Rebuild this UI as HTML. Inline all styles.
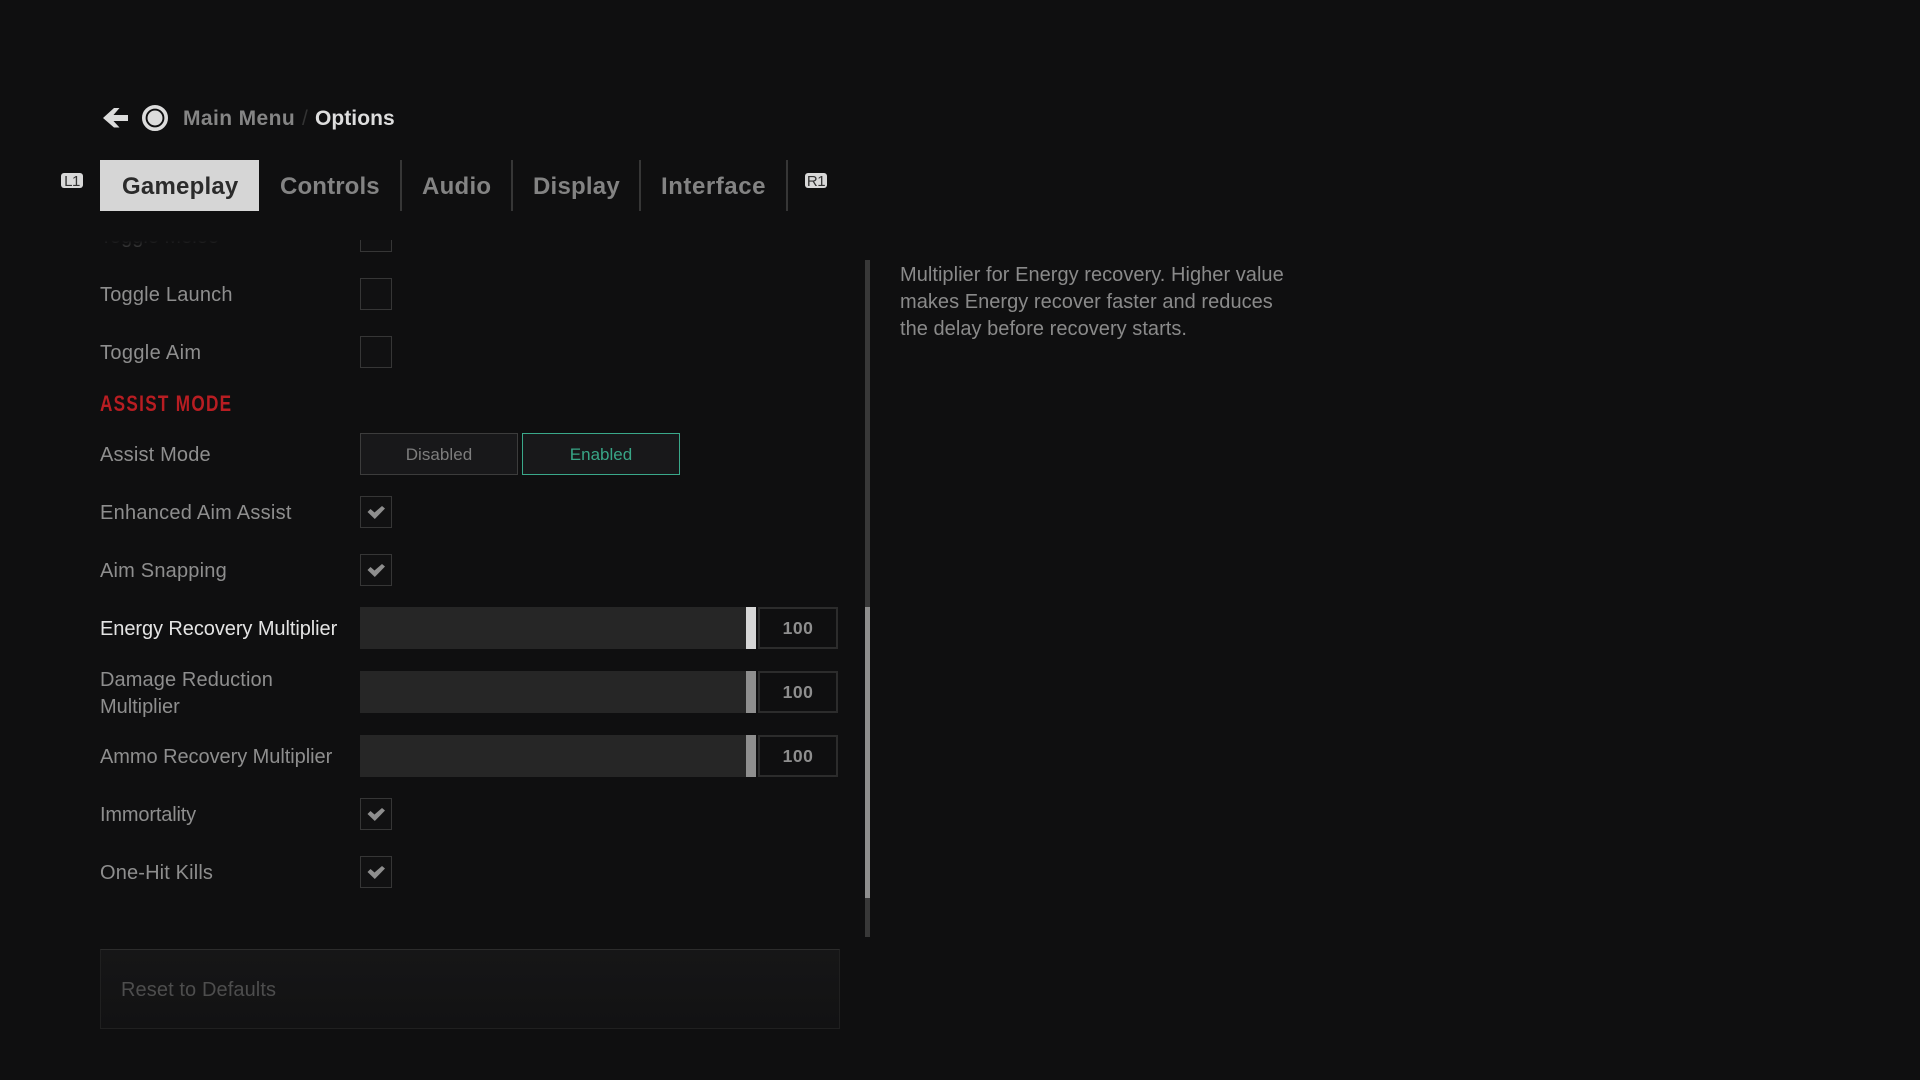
<!DOCTYPE html>
<html><head><meta charset="utf-8"><title>Options</title>
<style>
html,body{margin:0;padding:0;width:1920px;height:1080px;overflow:hidden;background:#0f0f10;}
body{position:relative;font-family:"Liberation Sans",Arial,sans-serif;color:#8e8e8e;}
.a{position:absolute;white-space:nowrap;}
.lab{position:absolute;left:100px;font-size:20px;line-height:27px;white-space:nowrap;color:#8e8e8e;}
.cb{position:absolute;left:360px;width:30px;height:30px;border:1px solid #363636;background:#111112;}
.cb svg{position:absolute;left:-1px;top:-1px;}
.tab{position:absolute;top:170.500px;font-size:24px;line-height:32px;font-weight:bold;color:#838383;white-space:nowrap;}
.div{position:absolute;top:160px;width:2px;height:51px;background:#363636;}
.track{position:absolute;left:360px;width:386px;height:42px;background:#262626;}
.h{position:absolute;left:746px;width:10px;height:42px;background:#8e8e8e;}
.val{position:absolute;left:758px;border:2px solid #2c2c2c;width:76px;height:38px;line-height:39px;text-align:center;font-size:17.500px;letter-spacing:.5px;font-weight:bold;color:#8e8e8e;background:#0f0f10;}
.badge{position:absolute;width:22px;height:15px;background:#d8d8d8;border-radius:3px;color:#333;font-size:15px;letter-spacing:-.5px;line-height:17px;text-align:center;}
</style></head><body>

<svg class="a" style="left:100px;top:104px" width="72" height="28" viewBox="100 104 72 28">
<path d="M103 118 L114 108 L119.500 108 L113.500 115 L128 115 L128 121 L113.500 121 L119.500 127.500 L114 127.500Z" fill="#dcdcdc"/>
<circle cx="155" cy="118" r="11.200" fill="none" stroke="#dcdcdc" stroke-width="3.600"/>
<circle cx="155" cy="118" r="7.500" fill="#dcdcdc"/>
</svg>
<div class="a" style="left:183px;top:106px;font-size:21px;line-height:26px;font-weight:bold;color:#858585;letter-spacing:.4px;">Main Menu</div>
<div class="a" style="left:302px;top:106px;font-size:21px;line-height:26px;color:#333;">/</div>
<div class="a" style="left:315px;top:106px;font-size:21px;line-height:26px;font-weight:bold;color:#dedede;letter-spacing:.05px;">Options</div>

<div class="badge" style="left:61px;top:173px;">L1</div>
<div class="a" style="left:100px;top:160px;width:159px;height:51px;background:#d6d6d6;"></div>
<div class="tab" style="left:122px;color:#2b2b2b;letter-spacing:.22px;">Gameplay</div>
<div class="tab" style="left:280px;letter-spacing:.14px;">Controls</div>
<div class="div" style="left:400px;"></div>
<div class="tab" style="left:422px;letter-spacing:.27px;">Audio</div>
<div class="div" style="left:511px;"></div>
<div class="tab" style="left:533px;letter-spacing:.22px;">Display</div>
<div class="div" style="left:639px;"></div>
<div class="tab" style="left:661px;letter-spacing:.55px;">Interface</div>
<div class="div" style="left:786px;"></div>
<div class="badge" style="left:805px;top:173px;">R1</div>

<div class="a" style="left:0;top:240px;width:860px;height:12px;overflow:hidden;">
  <div class="lab" style="top:-16px;opacity:.4;-webkit-mask-image:linear-gradient(transparent 60%,#000 90%);mask-image:linear-gradient(transparent 60%,#000 90%);">Toggle Melee</div>
  <div class="cb" style="top:-20px;"></div>
</div>

<div class="lab" style="top:282px;letter-spacing:.2px;">Toggle Launch</div><div class="cb" style="top:278px;"></div>
<div class="lab" style="top:340px;letter-spacing:.36px;">Toggle Aim</div><div class="cb" style="top:336px;"></div>

<div class="a" style="left:100px;top:391px;font-size:22px;line-height:26px;font-weight:bold;color:#b81d22;letter-spacing:1.650px;transform:scaleX(.78);transform-origin:0 50%;">ASSIST MODE</div>

<div class="lab" style="top:442px;letter-spacing:.17px;">Assist Mode</div>
<div class="a" style="left:360px;top:433px;width:156px;height:40px;border:1px solid #3c3c3c;background:#18181a;text-align:center;line-height:42px;font-size:17px;color:#7d7d7d;letter-spacing:.05px;">Disabled</div>
<div class="a" style="left:522px;top:433px;width:156px;height:40px;border:1px solid #3aa88a;background:#18181a;text-align:center;line-height:42px;font-size:17px;color:#38a586;">Enabled</div>

<div class="lab" style="top:500px;letter-spacing:.26px;">Enhanced Aim Assist</div>
<div class="cb" style="top:496px;"><svg width="32" height="32"><path d="M7.500 16 L10.500 13 L14.500 16.500 L22 10 L25 12.500 L14.800 23 Z" fill="#8e8e8e"/></svg></div>
<div class="lab" style="top:558px;letter-spacing:.2px;">Aim Snapping</div>
<div class="cb" style="top:554px;"><svg width="32" height="32"><path d="M7.500 16 L10.500 13 L14.500 16.500 L22 10 L25 12.500 L14.800 23 Z" fill="#8e8e8e"/></svg></div>

<div class="lab" style="top:616px;color:#e4e4e4;letter-spacing:-.07px;">Energy Recovery Multiplier</div>
<div class="track" style="top:607px;"></div><div class="h" style="top:607px;background:#d6d6d6;"></div><div class="val" style="top:607px;">100</div>

<div class="lab" style="top:666.500px;letter-spacing:.11px;">Damage Reduction<br><span style="letter-spacing:-.03px">Multiplier</span></div>
<div class="track" style="top:671px;"></div><div class="h" style="top:671px;"></div><div class="val" style="top:671px;">100</div>

<div class="lab" style="top:744px;letter-spacing:-.05px;">Ammo Recovery Multiplier</div>
<div class="track" style="top:735px;"></div><div class="h" style="top:735px;"></div><div class="val" style="top:735px;">100</div>

<div class="lab" style="top:802px;letter-spacing:-.16px;">Immortality</div>
<div class="cb" style="top:798px;"><svg width="32" height="32"><path d="M7.500 16 L10.500 13 L14.500 16.500 L22 10 L25 12.500 L14.800 23 Z" fill="#8e8e8e"/></svg></div>
<div class="lab" style="top:860px;letter-spacing:.15px;">One-Hit Kills</div>
<div class="cb" style="top:856px;"><svg width="32" height="32"><path d="M7.500 16 L10.500 13 L14.500 16.500 L22 10 L25 12.500 L14.800 23 Z" fill="#8e8e8e"/></svg></div>

<div class="a" style="left:865px;top:260px;width:5px;height:677px;background:#383838;"></div>
<div class="a" style="left:865px;top:607px;width:5px;height:291px;background:#8e8e8e;"></div>

<div class="a" style="left:100px;top:949px;width:738px;height:78px;border:1px solid #202020;border-top-color:#2c2c2c;background:linear-gradient(#161617,#121213);"></div>
<div class="a" style="left:121px;top:977px;font-size:20px;line-height:27px;color:#4d4d4d;letter-spacing:.1px;">Reset to Defaults</div>

<div class="a" style="left:900px;top:262px;font-size:20px;line-height:27px;color:#8a8a8a;letter-spacing:.04px;">Multiplier for Energy recovery. Higher value<br>makes Energy recover faster and reduces<br>the delay before recovery starts.</div>
</body></html>
